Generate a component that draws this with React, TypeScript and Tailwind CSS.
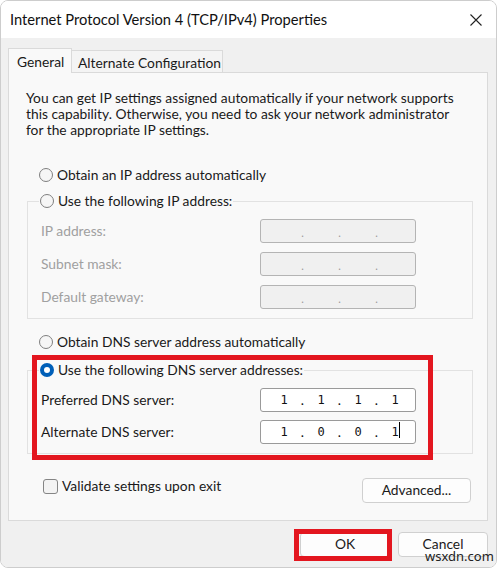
import React from 'react';

const Radio = ({ checked }: { checked?: boolean }) =>
  checked ? (
    <span className="w-[14px] h-[14px] rounded-full bg-[#005fb8] flex items-center justify-center shrink-0">
      <span className="w-[6px] h-[6px] rounded-full bg-white" />
    </span>
  ) : (
    <span className="w-[14px] h-[14px] rounded-full border border-[#7f7f7f] bg-[#f6f6f6] shrink-0" />
  );

const RadioRow = ({ checked, label }: { checked?: boolean; label: string }) => (
  <div className="h-[20px] flex items-center gap-[4px] text-[#1a1a1a] whitespace-nowrap">
    <Radio checked={checked} />
    <span>{label}</span>
  </div>
);

// four octet cells with dots between, like the Win32 IP address control
const IpBox = ({ value, disabled, caret }: { value?: string[]; disabled?: boolean; caret?: boolean }) => (
  <div
    className={`w-[156px] h-[24px] rounded-[3px] border flex items-center pl-[7px] ${
      disabled ? 'bg-[#f0f0f0] border-[#b4b4b4]' : 'bg-white border-[#9a9a9a]'
    }`}
  >
    {[0, 1, 2, 3].map(i => (
      <React.Fragment key={i}>
        <span className="w-[32px] text-center font-['DejaVu_Sans_Mono',monospace] text-[12px] text-[#111] relative">
          {value ? value[i] : ''}
          {caret && i === 3 && <span className="absolute top-[-1px] left-[20px] w-px h-[16px] bg-black" />}
        </span>
        {i < 3 && (
          <span className={`w-[5px] text-center ${disabled ? 'text-[#9a9a9a] text-[11px] pt-[4px]' : 'text-[#111]'}`}>.</span>
        )}
      </React.Fragment>
    ))}
  </div>
);

const Row = ({ label, disabled, value, caret }: { label: string; disabled?: boolean; value?: string[]; caret?: boolean }) => (
  <div className="flex items-center h-[24px]">
    <span className={`w-[219px] whitespace-nowrap ${disabled ? 'text-[#a0a0a0]' : 'text-[#1a1a1a]'}`}>{label}</span>
    <IpBox value={value} disabled={disabled} caret={caret} />
  </div>
);

export default function App() {
  return (
    <div className="w-[497px] h-[568px] bg-white rounded-[8px] border border-[#cdcdcd] overflow-hidden flex flex-col font-['Lato','Noto_Sans',sans-serif] text-[13.8px] relative">
      <div className="h-[37px] bg-white flex items-center justify-between pl-[9px] pr-[12px] shrink-0">
        <span className="text-[14.7px] text-[#111]">Internet Protocol Version 4 (TCP/IPv4) Properties</span>
        <svg width="12" height="12" viewBox="0 0 12 12" className="mr-[2px]">
          <path d="M0.5 0.5 L11.5 11.5 M11.5 0.5 L0.5 11.5" stroke="#222" strokeWidth="1.1" />
        </svg>
      </div>

      <div className="flex-1 bg-[#f0f0f0] pl-[7px] pr-[8px] pt-[10px] flex flex-col">
        <div className="flex items-end -mb-px relative z-10">
          <div className="w-[64px] h-[25px] bg-[#f9f9f9] border border-b-0 border-[#dadada] pl-[8px] pt-[3px] text-[#1a1a1a]">General</div>
          <div className="w-[152px] h-[23px] -ml-px bg-[#f4f4f4] border border-[#dadada] pl-[6px] pt-[2px] text-[#1a1a1a] whitespace-nowrap">
            Alternate Configuration
          </div>
        </div>

        <div className="h-[449px] bg-[#f9f9f9] border border-[#dadada] pl-[18px] pr-[14px] pt-[17px] relative">
          <div className="-ml-px leading-[16px] text-[#1a1a1a] whitespace-nowrap">
            <div>You can get IP settings assigned automatically if your network supports</div>
            <div>this capability. Otherwise, you need to ask your network administrator</div>
            <div>for the appropriate IP settings.</div>
          </div>

          <div className="mt-[27px] ml-[12px]">
            <RadioRow label="Obtain an IP address automatically" />
          </div>

          <fieldset className="mt-[6px] border border-[#e2e2e2] px-[13px] pb-[9px]">
            <legend className="ml-[-2px] px-[1px]">
              <RadioRow label="Use the following IP address:" />
            </legend>
            <div className="pt-[8px] flex flex-col gap-[9px]">
              <Row label="IP address:" disabled />
              <Row label="Subnet mask:" disabled />
              <Row label="Default gateway:" disabled />
            </div>
          </fieldset>

          <div className="mt-[13px] ml-[12px]">
            <RadioRow label="Obtain DNS server address automatically" />
          </div>

          <fieldset className="mt-[8px] border border-[#e2e2e2] px-[13px] pb-[9px]">
            <legend className="ml-[-2px] px-[1px]">
              <RadioRow checked label="Use the following DNS server addresses:" />
            </legend>
            <div className="pt-[8px] flex flex-col gap-[8px]">
              <Row label="Preferred DNS server:" value={['1', '1', '1', '1']} />
              <Row label="Alternate DNS server:" value={['1', '0', '0', '1']} caret />
            </div>
          </fieldset>

          <div className="mt-[22px] flex items-start justify-between">
            <div className="ml-[16px] h-[20px] flex items-center gap-[4px] text-[#1a1a1a]">
              <span className="w-[15px] h-[15px] rounded-[3px] border border-[#858585] bg-[#f3f3f3]" />
              <span>Validate settings upon exit</span>
            </div>
            <button className="mt-[2px] mr-[2px] w-[109px] h-[25px] rounded-[4px] border border-[#d0d0d0] bg-[#fdfdfd] text-[#1a1a1a]">
              Advanced...
            </button>
          </div>

          <div className="absolute left-[23px] top-[282px] w-[401px] h-[105px] border-[5px] border-[#e3161f]" />
        </div>

        <div className="mt-[11px] flex justify-end gap-[8px]">
          <button className="w-[90px] h-[25px] rounded-[4px] border border-[#d0d0d0] bg-[#fdfdfd] text-[#1a1a1a]">OK</button>
          <button className="w-[90px] h-[25px] rounded-[4px] border border-[#d0d0d0] bg-[#fdfdfd] text-[#1a1a1a]">Cancel</button>
        </div>
      </div>

      <div className="absolute left-[293px] top-[528px] w-[98px] h-[32px] border-[5px] border-[#e3161f]" />
      <span className="absolute left-[424px] top-[548px] text-[13px] leading-[15px] text-[#222] font-['Noto_Sans',sans-serif]">wsxdn.com</span>
    </div>
  );
}
